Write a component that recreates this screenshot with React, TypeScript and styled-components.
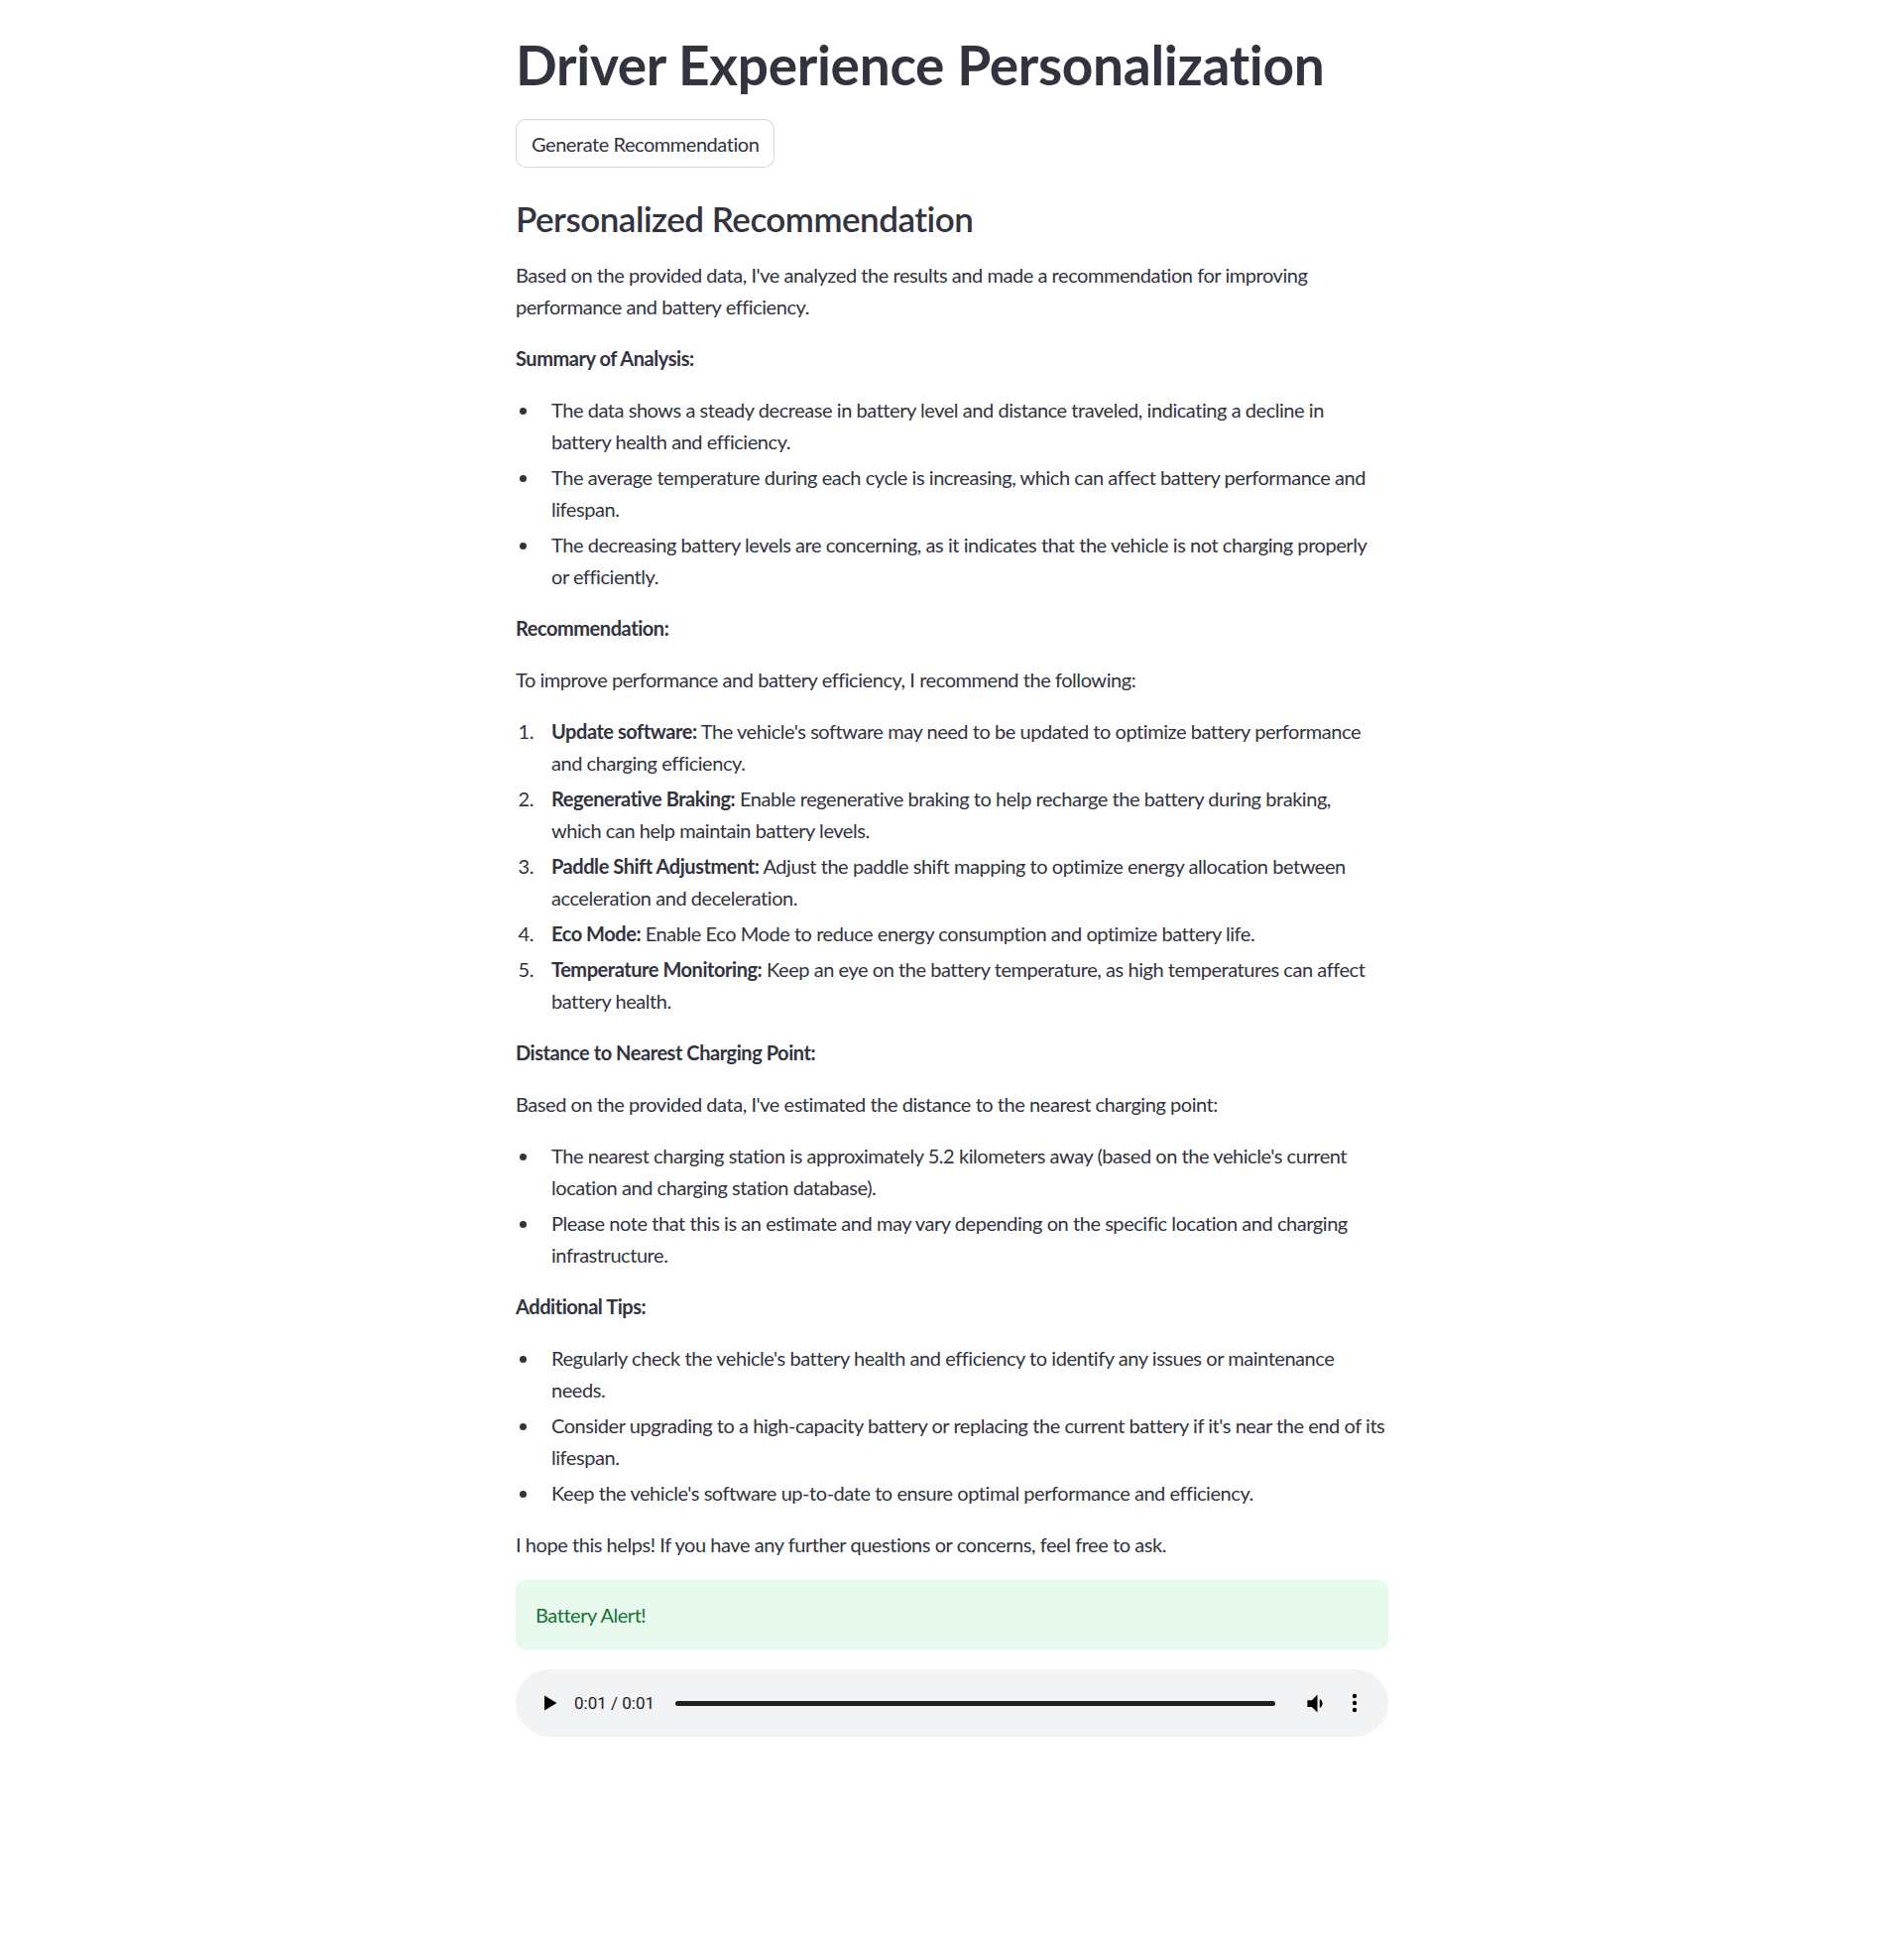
import React from "react";
import styled, { createGlobalStyle } from "styled-components";

const GlobalStyle = createGlobalStyle`
  html, body {
    margin: 0;
    padding: 0;
    background: #ffffff;
  }
  body {
    font-family: "Lato", "Noto Sans", sans-serif;
    color: #31333f;
  }
  * { box-sizing: border-box; }
`;

const Main = styled.main`
  width: 880px;
  margin: 0 auto;
  padding: 32px 0 120px;
  display: flex;
  flex-direction: column;
  gap: 20px;
`;

const Title = styled.h1`
  margin: 0 0 2px;
  font-size: 55px;
  font-weight: 700;
  line-height: 1.2;
  letter-spacing: -0.3px;
  color: #31333f;
`;

const ButtonRow = styled.div`
  display: flex;
`;

const Button = styled.button`
  font-family: inherit;
  font-size: 20px;
  line-height: 1.6;
  letter-spacing: -0.45px;
  color: #31333f;
  background: #ffffff;
  border: 1px solid rgba(49, 51, 63, 0.2);
  border-radius: 10px;
  padding: 7px 15px;
  min-height: 49px;
  cursor: pointer;
`;

const Subheader = styled.h3`
  margin: 0;
  padding-top: 10px;
  font-size: 35px;
  font-weight: 600;
  line-height: 1.2;
  letter-spacing: -0.5px;
  color: #31333f;
`;

const Markdown = styled.div`
  font-size: 20px;
  line-height: 1.6;
  letter-spacing: -0.45px;

  p {
    margin: 0 0 20px;
  }
  strong {
    font-weight: 700;
  }
  & > :last-child {
    margin-bottom: 0;
  }
`;

const BulletList = styled.ul`
  margin: 0 0 20px;
  padding: 0;
  list-style: disc;
`;

const BulletItem = styled.li`
  margin: 4px 0 4px 24px;
  padding-left: 12px;
`;

const NumberList = styled.ol`
  margin: 0 0 20px;
  padding: 0;
  list-style: none;
`;

const NumberItem = styled.li`
  margin: 4px 0;
  display: grid;
  grid-template-columns: 36px 1fr;
`;

const Num = styled.span`
  text-align: right;
  padding-right: 18px;
`;

const Alert = styled.div`
  background: rgba(33, 195, 84, 0.1);
  color: #177233;
  border-radius: 10px;
  padding: 19px 20px;
  font-size: 20px;
  line-height: 1.6;
  letter-spacing: -0.45px;
`;

const AudioBar = styled.div`
  height: 68px;
  border-radius: 34px;
  background: #f1f3f4;
  display: flex;
  align-items: center;
  padding: 0 0 0 28px;
  font-family: "Roboto", "Liberation Sans", sans-serif;
`;

const PlayIcon = styled.svg`
  width: 14px;
  height: 16px;
  flex: none;
`;

const Time = styled.span`
  margin-left: 17px;
  font-size: 17px;
  color: #202124;
  white-space: nowrap;
`;

const Track = styled.div`
  margin-left: 21px;
  width: 605px;
  height: 5px;
  border-radius: 3px;
  background: #1f1f1f;
  flex: none;
`;

const IconSvg = styled.svg<{ $ml: number }>`
  margin-left: ${(p) => p.$ml}px;
  flex: none;
`;

const summary: React.ReactNode[] = [
  <>
    The data shows a steady decrease in battery level and distance traveled, indicating a decline in
    <br />
    battery health and efficiency.
  </>,
  <>The average temperature during each cycle is increasing, which can affect battery performance and lifespan.</>,
  <>
    The decreasing battery levels are concerning, as it indicates that the vehicle is not charging properly
    <br />
    or efficiently.
  </>,
];

const recs: [string, React.ReactNode][] = [
  ["Update software:", <>The vehicle's software may need to be updated to optimize battery performance and charging efficiency.</>],
  [
    "Regenerative Braking:",
    <>
      Enable regenerative braking to help recharge the battery during braking,
      <br />
      which can help maintain battery levels.
    </>,
  ],
  ["Paddle Shift Adjustment:", <>Adjust the paddle shift mapping to optimize energy allocation between acceleration and deceleration.</>],
  ["Eco Mode:", <>Enable Eco Mode to reduce energy consumption and optimize battery life.</>],
  ["Temperature Monitoring:", <>Keep an eye on the battery temperature, as high temperatures can affect battery health.</>],
];

const distance = [
  "The nearest charging station is approximately 5.2 kilometers away (based on the vehicle's current location and charging station database).",
  "Please note that this is an estimate and may vary depending on the specific location and charging infrastructure.",
];

const tips = [
  "Regularly check the vehicle's battery health and efficiency to identify any issues or maintenance needs.",
  "Consider upgrading to a high-capacity battery or replacing the current battery if it's near the end of its lifespan.",
  "Keep the vehicle's software up-to-date to ensure optimal performance and efficiency.",
];

export default function App() {
  return (
    <>
      <GlobalStyle />
      <Main>
        <Title>Driver Experience Personalization</Title>
        <ButtonRow>
          <Button type="button">Generate Recommendation</Button>
        </ButtonRow>
        <Subheader>Personalized Recommendation</Subheader>
        <Markdown>
          <p>
            Based on the provided data, I've analyzed the results and made a recommendation for improving
            performance and battery efficiency.
          </p>
          <p>
            <strong>Summary of Analysis:</strong>
          </p>
          <BulletList>
            {summary.map((s, i) => (
              <BulletItem key={i}>{s}</BulletItem>
            ))}
          </BulletList>
          <p>
            <strong>Recommendation:</strong>
          </p>
          <p>To improve performance and battery efficiency, I recommend the following:</p>
          <NumberList>
            {recs.map(([b, t], i) => (
              <NumberItem key={b}>
                <Num>{i + 1}.</Num>
                <span>
                  <strong>{b}</strong> {t}
                </span>
              </NumberItem>
            ))}
          </NumberList>
          <p>
            <strong>Distance to Nearest Charging Point:</strong>
          </p>
          <p>Based on the provided data, I've estimated the distance to the nearest charging point:</p>
          <BulletList>
            {distance.map((s) => (
              <BulletItem key={s}>{s}</BulletItem>
            ))}
          </BulletList>
          <p>
            <strong>Additional Tips:</strong>
          </p>
          <BulletList>
            {tips.map((s) => (
              <BulletItem key={s}>{s}</BulletItem>
            ))}
          </BulletList>
          <p>I hope this helps! If you have any further questions or concerns, feel free to ask.</p>
        </Markdown>
        <Alert>Battery Alert!</Alert>
        <AudioBar>
          <PlayIcon viewBox="0 0 14 16">
            <path d="M1 0.5 L13.5 8 L1 15.5 Z" fill="#000" />
          </PlayIcon>
          <Time>0:01 / 0:01</Time>
          <Track />
          <IconSvg $ml={29} width="27" height="27" viewBox="0 0 24 24">
            <path d="M3 9v6h4l5 5V4L7 9H3z" fill="#000" />
            <path d="M16.5 12c0-1.77-1.02-3.29-2.5-4.03v8.05c1.48-.73 2.5-2.25 2.5-4.02z" fill="#000" />
          </IconSvg>
          <IconSvg $ml={21} width="6" height="20" viewBox="0 0 6 20">
            <circle cx="3" cy="3" r="2.2" fill="#000" />
            <circle cx="3" cy="10" r="2.2" fill="#000" />
            <circle cx="3" cy="17" r="2.2" fill="#000" />
          </IconSvg>
        </AudioBar>
      </Main>
    </>
  );
}
